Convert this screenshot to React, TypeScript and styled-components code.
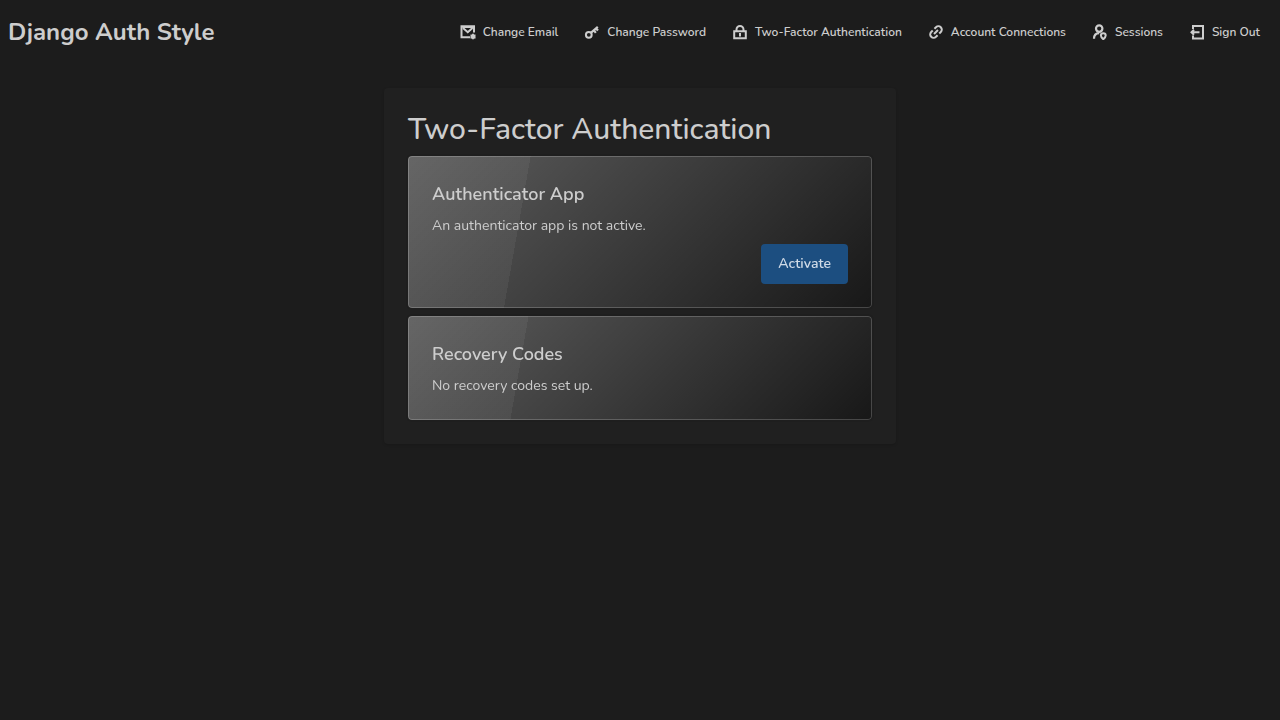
import React from "react";
import styled, { createGlobalStyle } from "styled-components";

const GlobalStyle = createGlobalStyle`
  *, *::before, *::after { box-sizing: border-box; }
  body {
    margin: 0;
    background: #1c1c1c;
    color: #cdcdcd;
    font-family: Nunito, Lato, "Open Sans", sans-serif;
    font-size: 14px;
    line-height: 20px;
  }
  h1, h2, p { margin: 0; }
`;

const Header = styled.header`
  display: flex;
  align-items: center;
  justify-content: space-between;
  min-height: 64px;
  padding: 8px;
`;

const Brand = styled.a`
  color: inherit;
  font-size: 24px;
  line-height: 32px;
  font-weight: 700;
  text-decoration: none;
  white-space: nowrap;
`;

const Nav = styled.nav`
  display: flex;
  align-items: center;
  gap: 2px;
`;

const NavLink = styled.a`
  display: flex;
  align-items: center;
  gap: 7px;
  height: 32px;
  padding: 0 12px;
  color: inherit;
  font-size: 12px;
  line-height: 16px;
  font-weight: 600;
  text-decoration: none;
  white-space: nowrap;
`;

const Icon = styled.svg`
  flex: none;
  width: 16px;
  height: 16px;
  fill: none;
  stroke: currentColor;
  stroke-width: 2;
`;

const Main = styled.main`
  display: flex;
  justify-content: center;
  padding: 24px 16px;
`;

const Card = styled.section`
  display: flex;
  flex-direction: column;
  gap: 8px;
  width: 100%;
  max-width: 512px;
  padding: 24px;
  border-radius: 4px;
  background: #202020;
  box-shadow: 0 1px 3px rgb(0 0 0 / 10%), 0 1px 2px -1px rgb(0 0 0 / 10%);
`;

const Title = styled.h1`
  font-size: 30px;
  line-height: 36px;
  font-weight: 500;
`;

const Panel = styled.article`
  display: flex;
  flex-direction: column;
  gap: 8px;
  padding: 24px;
  border-radius: 4px;
  background-color: #181818;
  background-image:
    linear-gradient(135deg, rgb(255 255 255 / 30%) 0%, rgb(0 0 0 / 0%) 100%),
    linear-gradient(100deg, rgb(255 255 255 / 5%) 25%, rgb(0 0 0 / 0%) 25%);
  box-shadow: inset 0 0 0 1px rgb(255 255 255 / 20%), 0 0 0 2px rgb(0 0 0 / 5%);
  backdrop-filter: blur(40px);
`;

const PanelTitle = styled.h2`
  font-size: 18px;
  line-height: 28px;
  font-weight: 600;
`;

const PanelText = styled.p`
  font-weight: 400;
`;

const Actions = styled.div`
  display: flex;
  justify-content: flex-end;
`;

const Button = styled.button`
  height: 40px;
  padding: 0 17px;
  border: 0;
  border-radius: 4px;
  background: #1c4e80;
  color: #d0dbe7;
  font: inherit;
  font-weight: 600;
  cursor: pointer;
`;

const links = [
  {
    label: "Change Email",
    icon: (
      <>
        <path d="M10 13.2H1.5v-11h12.5V8.5" />
        <path d="M2.5 3.5h10.5L7.75 8.5z" strokeWidth="1" />
        <path d="M3 4 7.75 8.2 12.5 4" />
        <circle cx="13" cy="12.5" r="2.5" stroke="none" fill="currentColor" />
        <path d="M13 9.5v6M10.4 11l5.2 3M10.4 14l5.2-3" strokeWidth="1" />
      </>
    ),
  },
  {
    label: "Change Password",
    icon: (
      <>
        <circle cx="4.8" cy="10.8" r="2.9" />
        <path d="M6.8 8.8 13.8 2.8M9.8 6.2l2 2.6M12 4.4l2 2.2" strokeWidth="2.2" />
      </>
    ),
  },
  {
    label: "Two-Factor Authentication",
    icon: (
      <>
        <path d="M2.2 7.2h11.6v7H2.2zM4.5 7V5.5a3.5 3.5 0 0 1 7 0V7" />
        <path d="M8 9v3.5" />
      </>
    ),
  },
  {
    label: "Account Connections",
    icon: (
      <g transform="rotate(-45 8 8)">
        <path d="M6.8 4.6H4.6a3.4 3.4 0 0 0 0 6.8h2.2M9.2 4.6h2.2a3.4 3.4 0 0 1 0 6.8H9.2M5.2 8h5.6" />
      </g>
    ),
  },
  {
    label: "Sessions",
    icon: (
      <>
        <circle cx="7.2" cy="4.6" r="3.2" strokeWidth="2.2" />
        <path d="M2 14.8c0-3.2 1.8-5.4 5.2-5.6" strokeWidth="2.2" />
        <path d="M11.3 9.3c1.5 0 2.4 1 2.4 2.2 0 1.6-2.4 3.7-2.4 3.7S8.9 13.1 8.9 11.5c0-1.2.9-2.2 2.4-2.2z" />
      </>
    ),
  },
  {
    label: "Sign Out",
    icon: (
      <>
        <path d="M4 5V2h10v12.5H4V11.5" />
        <path d="M10.5 8.2H3M5 5.7 2.5 8.2 5 10.7" />
      </>
    ),
  },
];

export default function App() {
  return (
    <>
      <GlobalStyle />
      <Header>
        <Brand href="#">Django Auth Style</Brand>
        <Nav aria-label="Account">
          {links.map(({ label, icon }) => (
            <NavLink key={label} href="#">
              <Icon viewBox="0 0 16 16" aria-hidden="true">{icon}</Icon>
              {label}
            </NavLink>
          ))}
        </Nav>
      </Header>
      <Main>
        <Card>
          <Title>Two-Factor Authentication</Title>
          <Panel>
            <PanelTitle>Authenticator App</PanelTitle>
            <PanelText>An authenticator app is not active.</PanelText>
            <Actions>
              <Button type="button">Activate</Button>
            </Actions>
          </Panel>
          <Panel>
            <PanelTitle>Recovery Codes</PanelTitle>
            <PanelText>No recovery codes set up.</PanelText>
          </Panel>
        </Card>
      </Main>
    </>
  );
}
